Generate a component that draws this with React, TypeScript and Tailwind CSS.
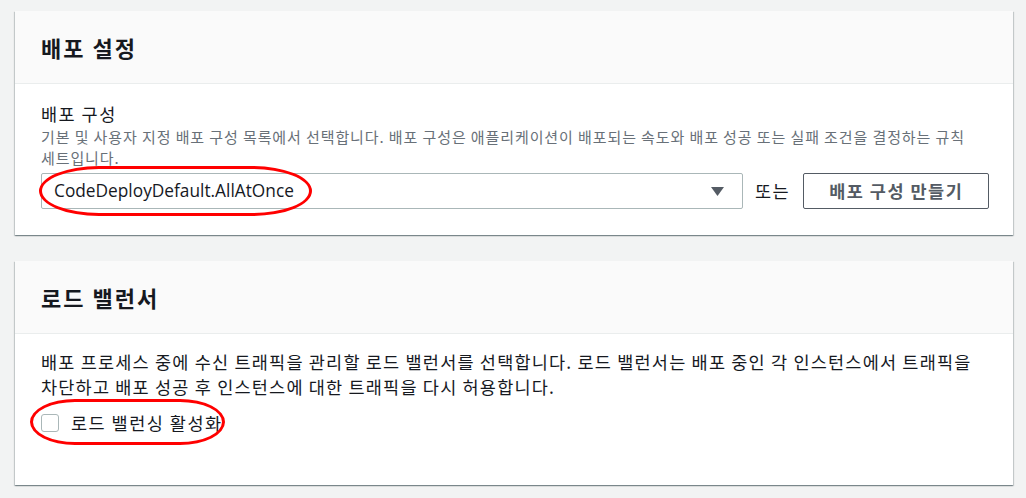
const kr = "font-['Noto_Sans_CJK_KR',sans-serif]";

function Card({ title, children }: { title: string; children: React.ReactNode }) {
  return (
    <section className="bg-white shadow-[0_1px_1px_0_rgba(0,28,36,0.3),1px_1px_1px_0_rgba(0,28,36,0.15),-1px_1px_1px_0_rgba(0,28,36,0.15)]">
      <div className="h-[73px] bg-[#fafafa] border-b border-[#eaeded] flex items-center px-[26px]">
        <h2 className="text-[22px] font-bold text-[#16191f] leading-none tracking-[2px]">{title}</h2>
      </div>
      {children}
    </section>
  );
}

export default function App() {
  return (
    <div
      className={`min-h-[498px] bg-[#f2f3f3] pt-[11px] pl-[15px] pr-[13px] flex flex-col gap-[26px] text-[#16191f] ${kr}`}
    >
      <Card title="배포 설정">
        <div className="px-[26px] pt-[19px] pb-[26px]">
          <p className="text-[17.5px] leading-[22px] tracking-[1.5px]">배포 구성</p>
          <p className="text-[15px] leading-[21px] text-[#687078] mt-[1px] pr-[10px] tracking-[0.9px] break-keep">
            기본 및 사용자 지정 배포 구성 목록에서 선택합니다. 배포 구성은 애플리케이션이 배포되는 속도와 배포 성공 또는 실패 조건을 결정하는 규칙
            세트입니다.
          </p>
          <div className="relative flex items-center mt-[5px]">
            <div className="w-[702px] h-[36px] shrink-0 border border-[#aab7b8] rounded-[2px] flex items-center justify-between pl-[12px] pr-[18px]">
              <span className="font-['Open_Sans',sans-serif] text-[17.3px] text-[#16191f]">
                CodeDeployDefault.AllAtOnce
              </span>
              <svg width="13" height="9" viewBox="0 0 13 9">
                <path d="M0 0h13L6.5 9z" fill="#545b64" />
              </svg>
            </div>
            <span className="ml-[12px] text-[17.5px] whitespace-nowrap tracking-[1.5px]">또는</span>
            <button className="ml-[13px] w-[186px] h-[36px] shrink-0 border border-[#545b64] rounded-[2px] text-[17.5px] font-bold text-[#545b64] tracking-[1.5px] whitespace-nowrap flex items-center justify-center">
              배포 구성 만들기
            </button>
            <div className="absolute left-[-2px] top-[-7px] w-[273px] h-[50px] border-[3px] border-[#ff0000] rounded-[60px/25px] pointer-events-none" />
          </div>
        </div>
      </Card>

      <Card title="로드 밸런서">
        <div className="px-[26px] pt-[15px] pb-[53px]">
          <p className="text-[17.5px] leading-[25px] pr-[10px] tracking-[1.2px] break-keep">
            배포 프로세스 중에 수신 트래픽을 관리할 로드 밸런서를 선택합니다. 로드 밸런서는 배포 중인 각 인스턴스에서 트래픽을
            차단하고 배포 성공 후 인스턴스에 대한 트래픽을 다시 허용합니다.
          </p>
          <label className="relative flex items-center mt-[15px] w-fit">
            <span className="w-[18px] h-[18px] border border-[#aab7b8] rounded-[3px] bg-white" />
            <span className="ml-[12px] text-[17.5px] leading-[18px] tracking-[1.5px]">로드 밸런싱 활성화</span>
            <span className="absolute left-[-11px] top-[-15px] w-[195px] h-[46px] border-[3px] border-[#ff0000] rounded-[45px/23px] pointer-events-none" />
          </label>
        </div>
      </Card>
    </div>
  );
}
